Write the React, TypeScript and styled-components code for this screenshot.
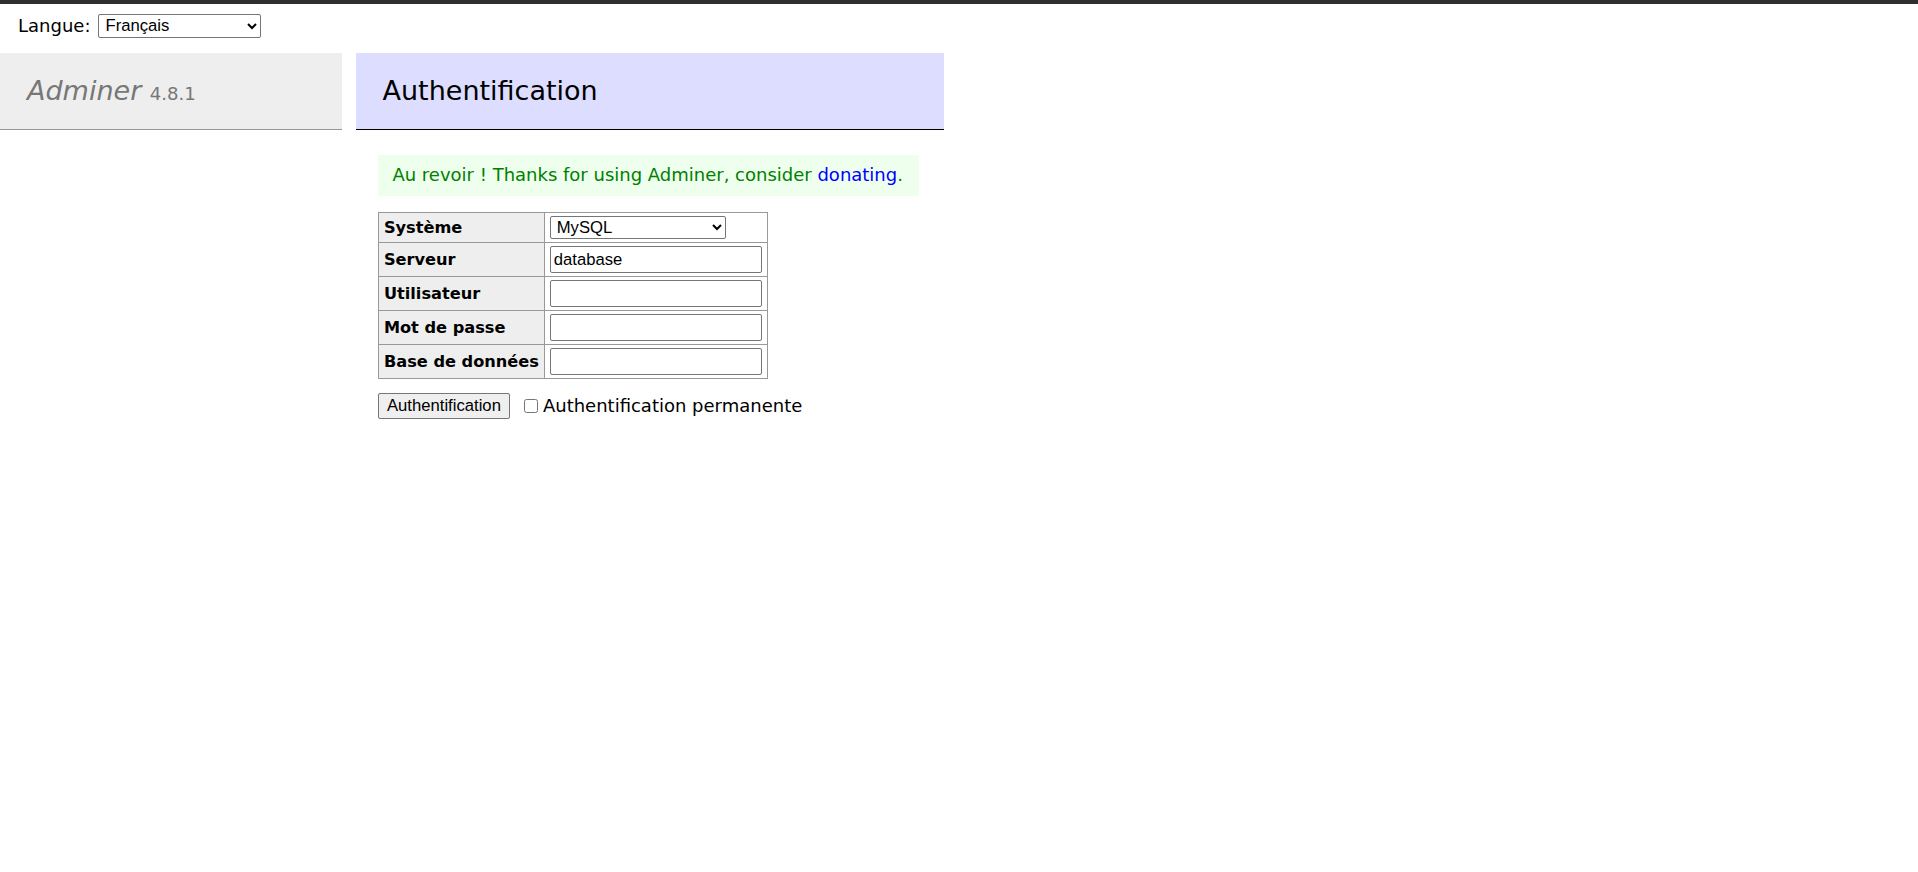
import React from "react";
import styled, { createGlobalStyle } from "styled-components";

const GlobalStyle = createGlobalStyle`
  html, body {
    margin: 0;
    padding: 0;
    background: #fff;
  }
  body {
    color: #000;
    font: 18px/1.25 "DejaVu Sans", Verdana, sans-serif;
  }
  * {
    box-sizing: border-box;
  }
`;

const fields = [
  { label: "Serveur", value: "database", type: "text" },
  { label: "Utilisateur", value: "", type: "text" },
  { label: "Mot de passe", value: "", type: "password" },
  { label: "Base de données", value: "", type: "text" },
];

export default function App() {
  return (
    <>
      <GlobalStyle />
      <Page>
        <TopBar />
        <LangBar>
          <LangLabel htmlFor="lang">Langue:</LangLabel>
          <LangSelect id="lang" defaultValue="fr">
            <option value="fr">Français</option>
            <option value="en">English</option>
          </LangSelect>
        </LangBar>

        <Main>
          <Menu>
            <Logo>
              <LogoLink href="#">Adminer</LogoLink> <Version>4.8.1</Version>
            </Logo>
          </Menu>

          <Content>
            <Title>Authentification</Title>
            <Message>
              Au revoir ! Thanks for using Adminer, consider{" "}
              <Link href="#">donating</Link>.
            </Message>

            <form onSubmit={(e) => e.preventDefault()}>
              <LoginTable>
                <tbody>
                  <tr>
                    <Th>Système</Th>
                    <Td>
                      <DriverSelect defaultValue="server">
                        <option value="server">MySQL</option>
                        <option value="sqlite">SQLite 3</option>
                        <option value="pgsql">PostgreSQL</option>
                      </DriverSelect>
                    </Td>
                  </tr>
                  {fields.map((f) => (
                    <tr key={f.label}>
                      <Th>{f.label}</Th>
                      <Td>
                        <Field type={f.type} defaultValue={f.value} />
                      </Td>
                    </tr>
                  ))}
                </tbody>
              </LoginTable>

              <Actions>
                <SubmitButton type="submit">Authentification</SubmitButton>
                <Permanent>
                  <Check type="checkbox" />
                  Authentification permanente
                </Permanent>
              </Actions>
            </form>
          </Content>
        </Main>
      </Page>
    </>
  );
}

const Page = styled.div`
  min-height: 872px;
`;

const TopBar = styled.div`
  height: 4px;
  background: #2f2f2f;
`;

const LangBar = styled.div`
  display: flex;
  align-items: center;
  height: 48.5px;
  padding: 0 18px 5px;
  line-height: 32.4px;
`;

const LangLabel = styled.label`
  margin-right: 8px;
`;

const Control = `
  font: 16.67px "Liberation Sans", Arial, sans-serif;
  color: #000;
  background: #fff;
  border: 1px solid #767676;
  border-radius: 2px;
`;

const LangSelect = styled.select`
  ${Control}
  width: 163px;
  height: 24px;
  padding: 0 2px;
`;

const Main = styled.div`
  display: flex;
  align-items: flex-start;
`;

const Menu = styled.div`
  width: 342px;
  flex-shrink: 0;
`;

const Logo = styled.h1`
  margin: 0;
  padding: 21.6px 27px;
  font-size: 27px;
  font-weight: normal;
  line-height: 1.25;
  color: #777;
  background: #eee;
  border-bottom: 1px solid #999;
`;

const LogoLink = styled.a`
  color: #777;
  font-style: italic;
  text-decoration: none;
`;

const Version = styled.span`
  font-size: 67%;
  color: #777;
`;

const Content = styled.div`
  width: 566px;
  margin-left: 36px;
  padding: 0 0 25px;
`;

const Title = styled.h2`
  margin: 0 0 25px -22.5px;
  padding: 21.6px 27px;
  font-size: 27px;
  font-weight: normal;
  line-height: 1.25;
  color: #000;
  background: #ddf;
  border-bottom: 1px solid #000;
`;

const Message = styled.div`
  margin: 0 25px 0 0;
  padding: 9px 14.4px;
  color: green;
  background: #efe;
`;

const Link = styled.a`
  color: blue;
  text-decoration: none;
`;

const LoginTable = styled.table`
  margin: 16.2px 0 0;
  border-collapse: collapse;
  font-size: 16.2px;
`;

const Th = styled.th`
  width: 162px;
  padding: 3px 4.9px;
  text-align: left;
  background: #eee;
  border: 1px solid #999;
  white-space: nowrap;
`;

const Td = styled.td`
  padding: 3px 4.9px;
  border: 1px solid #999;
`;

const DriverSelect = styled.select`
  ${Control}
  display: block;
  width: 176px;
  height: 23px;
  padding: 0 2px;
`;

const Field = styled.input`
  ${Control}
  display: block;
  width: 212px;
  height: 27px;
  padding: 1px 3px;
`;

const Actions = styled.p`
  display: flex;
  align-items: center;
  margin: 14px 0 0;
`;

const SubmitButton = styled.button`
  font: 16.67px "Liberation Sans", Arial, sans-serif;
  color: #000;
  height: 26px;
  padding: 0 8px;
  background: #efefef;
  border: 1px solid #767676;
  border-radius: 2px;
`;

const Permanent = styled.label`
  display: flex;
  align-items: center;
  margin-left: 12px;
`;

const Check = styled.input`
  width: 14px;
  height: 14px;
  margin: 0 5px 0 2px;
`;
